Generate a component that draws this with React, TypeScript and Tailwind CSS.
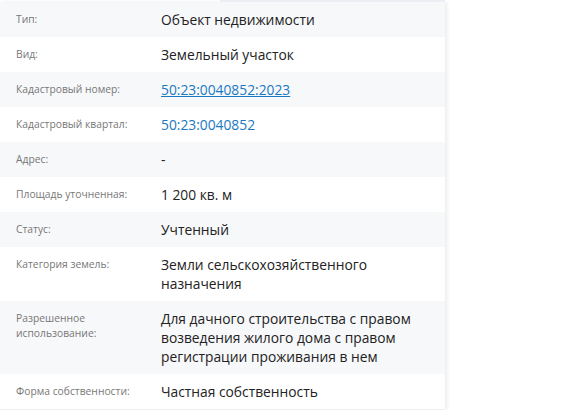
import React from "react";

type Row = { label: string; value: React.ReactNode };

const rows: Row[] = [
  { label: "Тип:", value: "Объект недвижимости" },
  { label: "Вид:", value: "Земельный участок" },
  {
    label: "Кадастровый номер:",
    value: (
      <a href="#" className="text-[#1a78c2] underline">
        50:23:0040852:2023
      </a>
    ),
  },
  {
    label: "Кадастровый квартал:",
    value: <span className="text-[#1a78c2]">50:23:0040852</span>,
  },
  { label: "Адрес:", value: "-" },
  { label: "Площадь уточненная:", value: "1 200 кв. м" },
  { label: "Статус:", value: "Учтенный" },
  { label: "Категория земель:", value: "Земли сельскохозяйственного назначения" },
  {
    label: "Разрешенное использование:",
    value: "Для дачного строительства с правом возведения жилого дома с правом регистрации проживания в нем",
  },
  { label: "Форма собственности:", value: "Частная собственность" },
];

export default function App() {
  return (
    <div
      className="w-[568px] h-[410px] bg-white overflow-hidden"
      style={{ fontFamily: '"Open Sans", "Noto Sans", sans-serif' }}
    >
      <div className="flex w-[445px]">
        <div className="w-[220px] h-[2px]" />
        <div className="flex-1 h-[2px] bg-[#eceef4]" />
      </div>
      <div className="w-[445px] border-b border-[#eeeeee] shadow-[2px_0_4px_rgba(0,0,0,0.08)]">
        {rows.map((r, i) => (
          <div
            key={i}
            className={`flex ${i % 2 === 0 ? "bg-[#f7f8fa]" : "bg-white"}`}
          >
            <div className="w-[161px] shrink-0 pl-4 pr-2 pt-[10px] pb-2 text-[10.3px] leading-[15px] text-[#777777]">
              {r.label}
            </div>
            <div className="flex-1 pr-7 py-2 text-[13.8px] leading-[19px] text-[#222222]">
              {r.value}
            </div>
          </div>
        ))}
      </div>
    </div>
  );
}
